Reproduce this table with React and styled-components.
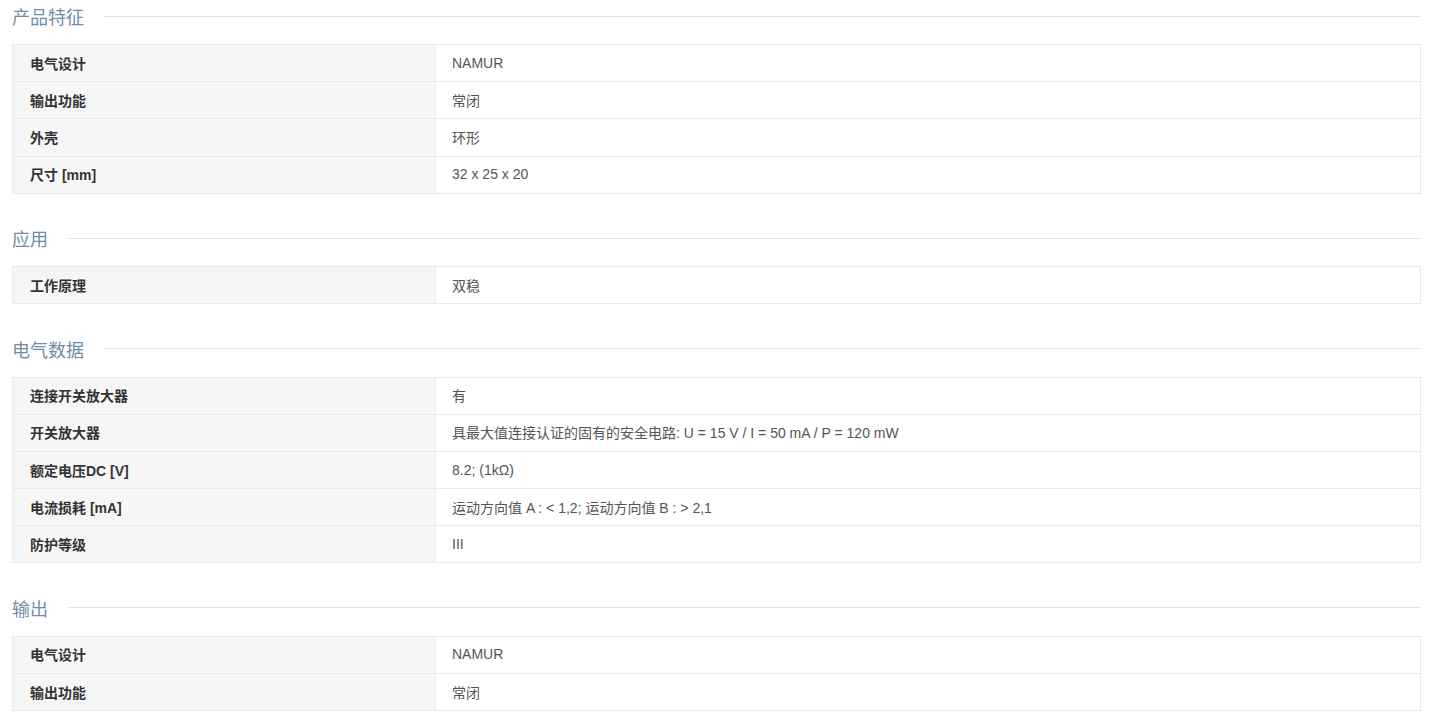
import { createGlobalStyle } from "styled-components"
import styled from "styled-components"

const GlobalStyle = createGlobalStyle`
    body{
        margin: 0;
        background: #fff;
        font-family: "Liberation Sans", Arial, "Noto Sans CJK SC", sans-serif;
    }
`

const Page = styled.div`
    padding: 1px 10px 0 12px;
`

const Section = styled.section`
    margin-bottom: 29.3px;
`

const Heading = styled.div`
    display: flex;
    align-items: center;
    gap: 20px;
    height: 30px;
    margin-bottom: 13px;
    h2{
        margin: 0;
        font-size: 18px;
        font-weight: normal;
        color: #6e8ea8;
        white-space: nowrap;
    }
    .line{
        flex: 1;
        height: 1px;
        background-color: #e4e4e4;
    }
`

const Table = styled.div`
    border: 1px solid #e8e8e8;
    border-top: none;
`

const Row = styled.div`
    display: grid;
    grid-template-columns: 422px 1fr;
    height: 37.2px;
    border-top: 1px solid #e8e8e8;
    box-sizing: border-box;
    font-size: 14px;
`

const Cell = styled.div`
    display: flex;
    align-items: center;
    padding: 0 16px 1px ${p => p.$label ? '17px' : '16px'};
    background-color: ${p => p.$label ? '#f6f6f6' : '#fff'};
    border-left: ${p => p.$label ? 'none' : '1px solid #ececec'};
    color: ${p => p.$label ? '#333' : '#555'};
    font-weight: ${p => p.$label ? 'bold' : 'normal'};
`

const sections = [
    {
        title: '产品特征',
        rows: [
            ['电气设计', 'NAMUR'],
            ['输出功能', '常闭'],
            ['外壳', '环形'],
            ['尺寸 [mm]', '32 x 25 x 20'],
        ]
    },
    {
        title: '应用',
        rows: [
            ['工作原理', '双稳'],
        ]
    },
    {
        title: '电气数据',
        rows: [
            ['连接开关放大器', '有'],
            ['开关放大器', '具最大值连接认证的固有的安全电路: U = 15 V / I = 50 mA / P = 120 mW'],
            ['额定电压DC [V]', '8.2; (1kΩ)'],
            ['电流损耗 [mA]', '运动方向值 A : < 1,2; 运动方向值 B : > 2,1'],
            ['防护等级', 'III'],
        ]
    },
    {
        title: '输出',
        rows: [
            ['电气设计', 'NAMUR'],
            ['输出功能', '常闭'],
        ]
    },
]

const App = () => {
    return (
        <Page>
            <GlobalStyle />
            {sections.map(section =>
                <Section key={section.title}>
                    <Heading>
                        <h2>{section.title}</h2>
                        <div className='line' />
                    </Heading>
                    <Table>
                        {section.rows.map(([label, value], i) =>
                            <Row key={i}>
                                <Cell $label>{label}</Cell>
                                <Cell>{value}</Cell>
                            </Row>
                        )}
                    </Table>
                </Section>
            )}
        </Page>
    )
}

export default App
